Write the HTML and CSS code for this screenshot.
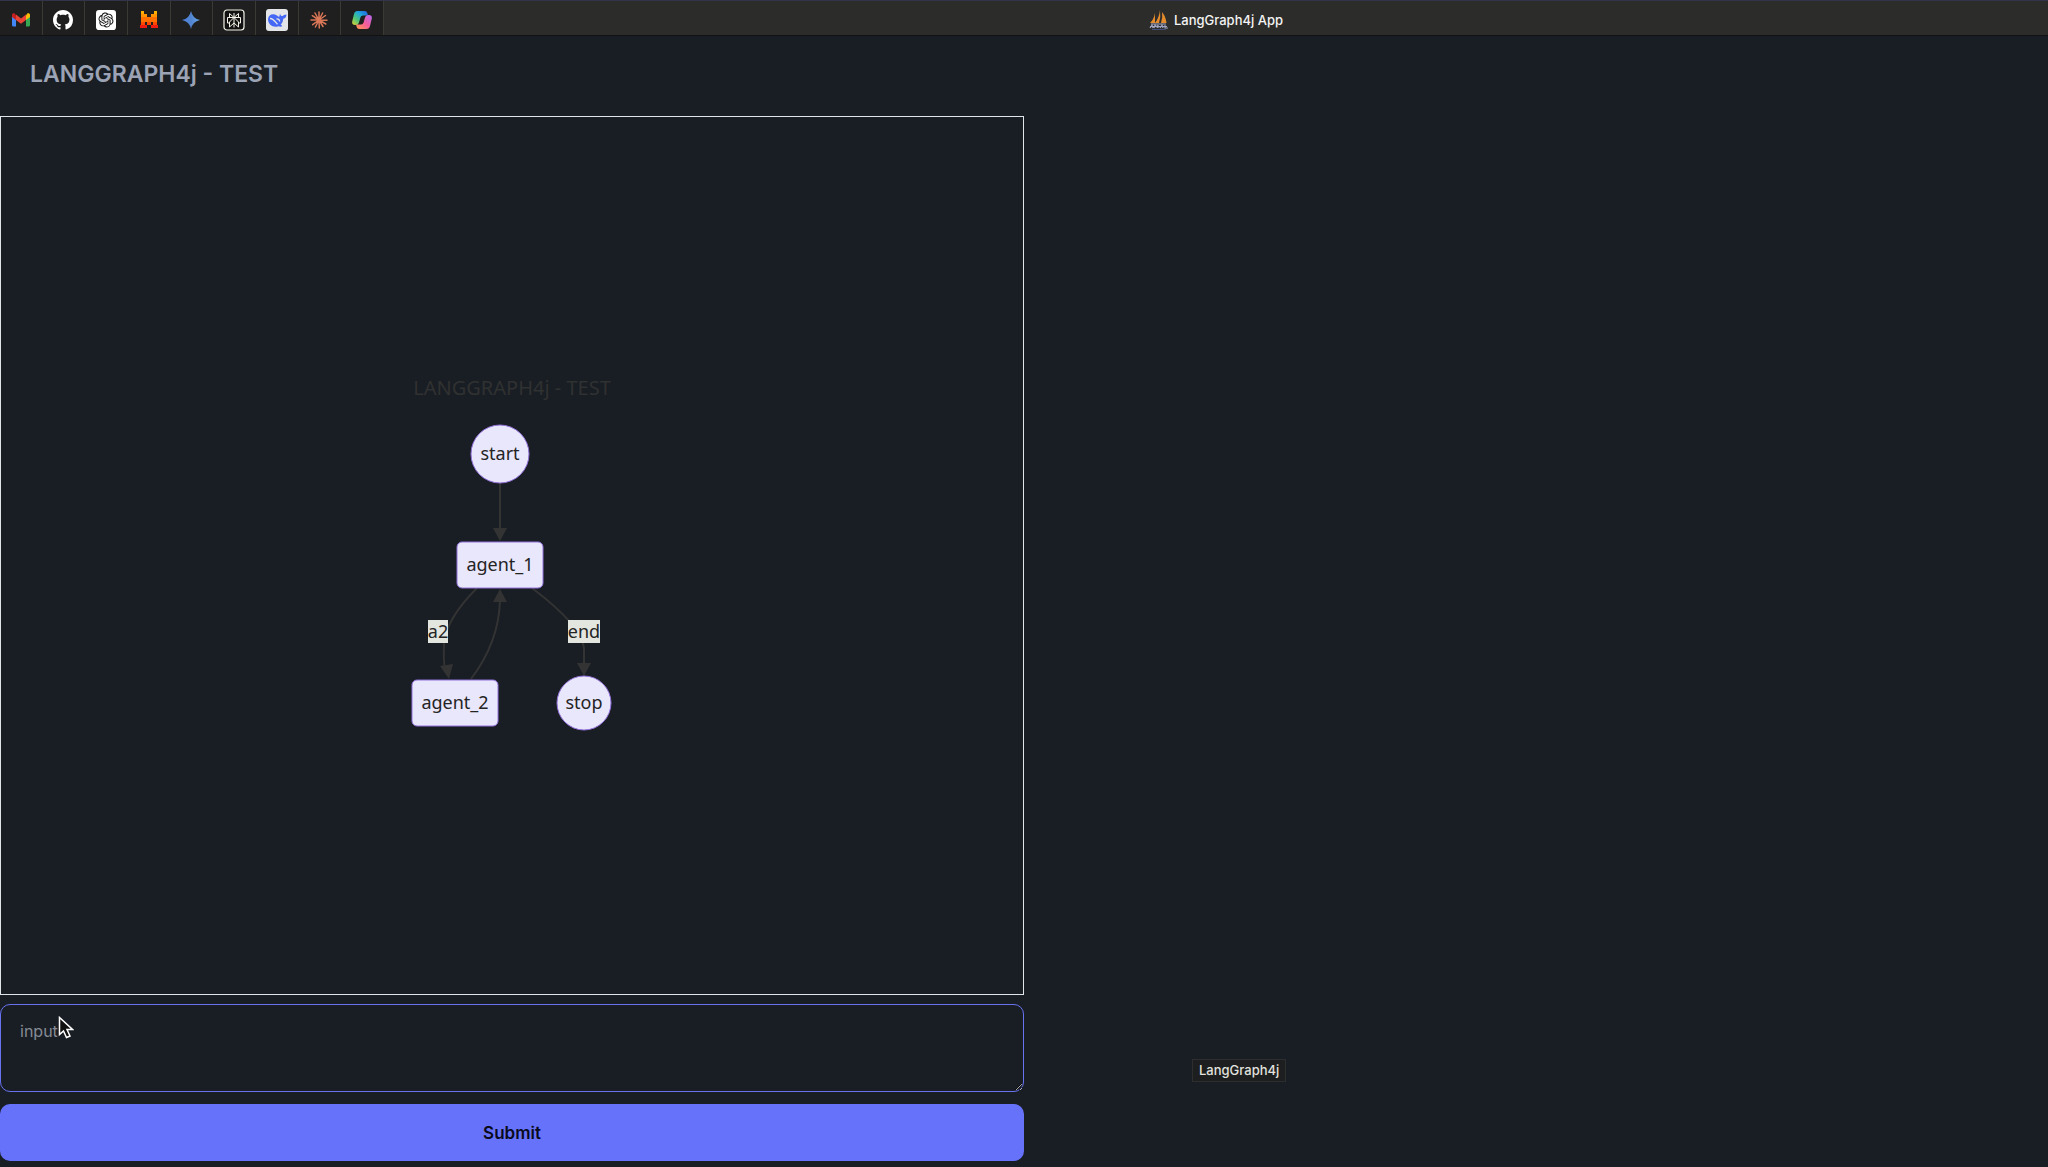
FILE: index.html
```html
<!DOCTYPE html>
<html lang="en">
<head>
<meta charset="utf-8">
<meta name="viewport" content="width=device-width, initial-scale=1">
<title>LangGraph4j App</title>
<link rel="stylesheet" href="styles.css">
</head>
<body>
<header class="tabbar">
  <nav class="pinned" aria-label="Pinned tabs">
    <a class="tab" href="#" aria-label="Gmail"><svg width="18" height="14" viewBox="0 2 18 14"><path fill="#4285f4" d="M0 4v10a1.500 1.500 0 0 0 1.500 1.500H4V8z"/><path fill="#34a853" d="M14 8v7.500h2.500A1.500 1.500 0 0 0 18 14V4z"/><path fill="#fbbc04" d="M14 4.500V9l4-3V4c0-1.800-2-2-3-1.200z"/><path fill="#c5221f" d="M0 4v2l4 3V4.500L3 2.800C2 2 0 2.200 0 4z"/><path fill="#ea4335" d="M4 9V3.600l5 3.800 5-3.800V9l-5 3.800z"/></svg></a>
    <a class="tab" href="#" aria-label="GitHub"><svg width="20" height="20" viewBox="0 0 16 16"><path fill="#fff" d="M8 0C3.580 0 0 3.580 0 8c0 3.540 2.290 6.530 5.470 7.590.4.070.55-.17.55-.38 0-.19-.01-.82-.01-1.490-2.010.37-2.530-.49-2.690-.94-.09-.23-.48-.94-.82-1.130-.28-.15-.68-.52-.01-.53.63-.01 1.080.58 1.230.82.72 1.210 1.870.87 2.330.66.07-.52.28-.87.51-1.070-1.780-.2-3.640-.89-3.640-3.950 0-.87.31-1.590.82-2.150-.08-.2-.36-1.020.08-2.120 0 0 .67-.21 2.200.82.64-.18 1.320-.27 2-.27s1.360.09 2 .27c1.530-1.040 2.200-.82 2.200-.82.44 1.100.16 1.920.08 2.120.51.56.82 1.270.82 2.150 0 3.070-1.870 3.750-3.650 3.950.29.25.54.73.54 1.480 0 1.070-.01 1.930-.01 2.200 0 .21.15.46.55.38A8.010 8.010 0 0 0 16 8c0-4.420-3.580-8-8-8z"/></svg></a>
    <a class="tab" href="#" aria-label="ChatGPT"><svg width="20" height="20" viewBox="-4 -4 32 32"><rect x="-4" y="-4" width="32" height="32" rx="5" fill="#fff"/><path fill="#111" d="M22.2819 9.8211a5.9847 5.9847 0 0 0-.5157-4.9108 6.0462 6.0462 0 0 0-6.5098-2.9A6.0651 6.0651 0 0 0 4.9807 4.1818a5.9847 5.9847 0 0 0-3.9977 2.9 6.0462 6.0462 0 0 0 .7427 7.0966 5.98 5.98 0 0 0 .511 4.9107 6.051 6.051 0 0 0 6.5146 2.9001A5.9847 5.9847 0 0 0 13.2599 24a6.0557 6.0557 0 0 0 5.7718-4.2058 5.9894 5.9894 0 0 0 3.9977-2.9001 6.0557 6.0557 0 0 0-.7475-7.0729zm-9.022 12.6081a4.4755 4.4755 0 0 1-2.8764-1.0408l.1419-.0804 4.7783-2.7582a.7948.7948 0 0 0 .3927-.6813v-6.7369l2.02 1.1686a.071.071 0 0 1 .038.052v5.5826a4.504 4.504 0 0 1-4.4945 4.4944zm-9.6607-4.1254a4.4708 4.4708 0 0 1-.5346-3.0137l.142.0852 4.783 2.7582a.7712.7712 0 0 0 .7806 0l5.8428-3.3685v2.3324a.0804.0804 0 0 1-.0332.0615L9.74 19.9502a4.4992 4.4992 0 0 1-6.1408-1.6464zM2.3408 7.8956a4.485 4.485 0 0 1 2.3655-1.9728V11.6a.7664.7664 0 0 0 .3879.6765l5.8144 3.3543-2.0201 1.1685a.0757.0757 0 0 1-.071 0l-4.8303-2.7865A4.504 4.504 0 0 1 2.3408 7.872zm16.5963 3.8558L13.1038 8.364 15.1192 7.2a.0757.0757 0 0 1 .071 0l4.8303 2.7913a4.4944 4.4944 0 0 1-.6765 8.1042v-5.6772a.79.79 0 0 0-.407-.667zm2.0107-3.0231l-.142-.0852-4.7735-2.7818a.7759.7759 0 0 0-.7854 0L9.409 9.2297V6.8974a.0662.0662 0 0 1 .0284-.0615l4.8303-2.7866a4.4992 4.4992 0 0 1 6.6802 4.66zM8.3065 12.863l-2.02-1.1638a.0804.0804 0 0 1-.038-.0567V6.0742a4.4992 4.4992 0 0 1 7.3757-3.4537l-.142.0805L8.704 5.459a.7948.7948 0 0 0-.3927.6813zm1.0976-2.3654l2.602-1.4998 2.6069 1.4998v2.9994l-2.5974 1.4997-2.6067-1.4997Z"/></svg></a>
    <a class="tab" href="#" aria-label="Mistral"><svg width="20" height="18" viewBox="0 0 20 18"><path fill="#ffb000" d="M2 0h3v4H2zM15 0h3v4h-3z"/><path fill="#ff9300" d="M2 3h6v4H2zM12 3h6v4h-6z"/><path fill="#ff7000" d="M2 6h16v5H2z"/><path fill="#ff4900" d="M2 11h4v4H2zM8 11h4v3H8zM14 11h4v4h-4z"/><path fill="#f01c12" d="M1 14h7v3H1zM12 14h7v3h-7z"/></svg></a>
    <a class="tab" href="#" aria-label="Gemini"><svg width="18" height="18" viewBox="0 0 18 18"><defs><linearGradient id="gem" x1="0" x2="1"><stop stop-color="#4c83df"/><stop offset=".5" stop-color="#5284cf"/><stop offset="1" stop-color="#65a9ed"/></linearGradient></defs><path fill="url(#gem)" d="M9 0q1.500 7.500 9 9-7.500 1.500-9 9-1.500-7.500-9-9 7.500-1.500 9-9z"/></svg></a>
    <a class="tab" href="#" aria-label="Perplexity"><svg width="22" height="22" viewBox="0 0 22 22" fill="none" stroke="#f5f3e9"><rect x="1" y="1" width="20" height="20" rx="3" fill="#111" stroke-width="1.200"/><path stroke-width="1" d="M11 4v14.500M6.500 4.500v4M15.500 4.500v4M6.500 4.500 11 8.500l4.500-4M4.500 8.500h13v5.500h-2M4.500 8.500V14h2M11 8.500 6.500 13v5l4.500-4 4.500 4v-5L11 8.500"/></svg></a>
    <a class="tab" href="#" aria-label="DeepSeek"><svg width="22" height="22" viewBox="0 0 22 22"><rect width="22" height="22" rx="3" fill="#e3e5e8"/><path fill="#4568f5" d="M2 10c.5-4.500 5-6 9-3.500l2 1.500c.9-.8.5-2 1-3.200.5 1.500 1.200 2.400 2.600 2.300.8-.6 1.800-1.600 3.900-1.600-.1 2.800-1.200 3.900-3.200 4.200-.3 2.700-1.200 4.500-2.600 5.800l1.700 1.500c-1.200.9-2.600.8-4 .2C7.500 19 2 16 2 10z"/><path fill="none" stroke="#e3e5e8" stroke-width="1.300" d="M4 9.500c3-.2 5.500 3.500 7.500 5.800M10.500 10c1.800-.2 3 1 3.200 2.500"/></svg></a>
    <a class="tab" href="#" aria-label="Claude"><svg width="18" height="18" viewBox="0 0 18 18" stroke="#d97757" stroke-width="1.500" stroke-linecap="round"><path d="M9 9V1M9 9l3.600-7M9 9l6.500-4.500M9 9l8 .2M9 9l6.800 4M9 9l4 6.500M9 9l.3 8M9 9l-3.600 7M9 9l-6.300 4.700M9 9l-8-.1M9 9 2.300 4.700M9 9 5 2"/></svg></a>
    <a class="tab" href="#" aria-label="Copilot"><svg width="20" height="18" viewBox="0 0 20 18"><defs><linearGradient id="co1" x1="0" y1="1" x2="1" y2="0"><stop stop-color="#e4d52f"/><stop offset=".35" stop-color="#4ac47b"/><stop offset=".65" stop-color="#1ea5df"/><stop offset="1" stop-color="#2558d8"/></linearGradient><linearGradient id="co2" x1="1" y1="0" x2="0" y2="1"><stop stop-color="#b36bf5"/><stop offset=".5" stop-color="#f35b9b"/><stop offset="1" stop-color="#ff9c49"/></linearGradient></defs><path fill="url(#co1)" d="M5.500 0H13q1.800 0 2.300 2l.7 2.500H11Q9 4.500 8.400 6.500L7 11.500Q6.300 14 4 14H3Q-.5 14 .3 10L2 3Q2.700 0 5.500 0z"/><path fill="url(#co2)" d="M14.500 18H7q-1.800 0-2.300-2L4 13.500h5q2 0 2.600-2L13 6.500Q13.700 4 16 4h1q3.500 0 2.700 4L18 15q-.7 3-3.500 3z"/></svg></a>
  </nav>
  <div class="active-tab">
    <svg width="20" height="20" viewBox="0 0 20 20"><path fill="#e58b2c" d="M6 3v10H1q4-4 5-10zM11 0q1 7-1 13H6q4-5 5-13zM13 2q4 5 4.500 11H12q2-6 1-11z"/><path fill="none" stroke="#9fa3bf" stroke-width="1.200" d="M2 14h15M1 18l2-3 1 3M5 18l1-3 2 2 1-2v3M11 18l2-3 1 3M16 15v3h3M1 16.500h17"/><path stroke="#434d7c" d="M3 19.500h14"/></svg>
    <span>LangGraph4j App</span>
  </div>
</header>
<h1 class="title">LANGGRAPH4j - TEST</h1>
<main class="workspace">
  <form class="panel" onsubmit="return false">
    <section class="graph" aria-label="Graph">
      <svg class="diagram" width="204" height="353" viewBox="410 379 204 353">
        <text class="diagram-title" x="512" y="395">LANGGRAPH4j - TEST</text>
        <g class="edge">
          <path d="M500 483v48M477 588Q445 620 444 645t3 26M471 679Q499 642 500 600M532 588q50 38 52 60v20"/>
          <path class="arrow" d="M493 528h14l-7 13zM440 666l13-2-4 15zM577 663h14l-7 13zM493 602h14l-7-13z"/>
        </g>
        <g class="node">
          <circle cx="500" cy="454" r="29"/>
          <rect x="457" y="542" width="86" height="46" rx="5"/>
          <rect x="412" y="680" width="86" height="46" rx="5"/>
          <circle cx="584" cy="703" r="27"/>
        </g>
        <path class="edge-label" d="M428 620h20v23h-20zM568 620h32v23h-32z"/>
        <g class="label">
          <text x="500" y="460">start</text>
          <text x="500" y="571">agent_1</text>
          <text x="455" y="709">agent_2</text>
          <text x="584" y="709">stop</text>
          <text x="438" y="638">a2</text>
          <text x="584" y="638">end</text>
        </g>
      </svg>
    </section>
    <textarea class="input" aria-label="input" placeholder="input"></textarea>
    <button class="submit" type="submit">Submit</button>
  </form>
  <section class="output" aria-label="Output"></section>
</main>
<div class="tooltip" role="tooltip">LangGraph4j</div>
<svg class="cursor" width="16" height="24" viewBox="0 0 16 24" aria-hidden="true"><path fill="#111" stroke="#fff" stroke-width="1.500" d="M1.500 1.500v17l4-3.500 3 6.500 3.500-1.500-3-6.500h5.500z"/></svg>
</body>
</html>
```
FILE: styles.css
```css
* {
  box-sizing: border-box;
}

body {
  margin: 0;
  min-height: 100vh;
  display: flex;
  flex-direction: column;
  background: #191e24;
  color: #a6adbb;
  font-family: Inter, "Liberation Sans", sans-serif;
}

.tabbar {
  display: flex;
  height: 36px;
  background: #2c2c2b;
  border-top: 1px solid #33334a;
  border-bottom: 1px solid #101214;
}

.pinned {
  display: grid;
  grid-template-columns: repeat(9, 1fr);
  width: 384px;
  background: #1e1f1e;
}

.tab {
  display: flex;
  align-items: center;
  justify-content: center;
  padding-top: 3px;
  border-right: 1px solid #3a3a34;
}

.active-tab {
  flex: 1;
  display: flex;
  align-items: center;
  justify-content: center;
  gap: 5px;
  padding-top: 3px;
  color: #f4f4f4;
  font-size: 13px;
  font-weight: 500;
}

.title {
  margin: 0;
  padding: 24px 30px;
  height: 80px;
  color: #9ba3b4;
  font-size: 23px;
  line-height: 28px;
  font-weight: 600;
}

.workspace {
  flex: 1;
  display: grid;
  grid-template-columns: 1fr 1fr;
}

.panel {
  display: flex;
  flex-direction: column;
  padding-bottom: 6px;
}

.graph {
  flex: 1;
  display: flex;
  align-items: center;
  justify-content: center;
  margin-bottom: 9px;
  border: 1px solid #dfe5e8;
}

.diagram {
  display: block;
  overflow: visible;
  font-family: "Noto Sans", sans-serif;
  text-anchor: middle;
}

.diagram-title {
  fill: #303131;
  font-size: 20px;
}

.label {
  fill: #242424;
  font-size: 18px;
}

.node {
  fill: #e9e7fb;
  stroke: #9370db;
  stroke-width: 1;
}

.edge {
  fill: none;
  stroke: #333;
  stroke-width: 2;
}

.arrow {
  fill: #333;
  stroke: none;
}

.edge-label {
  fill: #e3e5df;
}

.input {
  display: block;
  width: 100%;
  height: 88px;
  margin: 0 0 12px;
  padding: 14px 19px;
  border: 1px solid #6872f0;
  border-radius: 10px;
  background: transparent;
  color: #a6adbb;
  font: 16px/24px Inter, "Liberation Sans", sans-serif;
  resize: vertical;
}

.input::placeholder {
  color: #858b96;
}

.submit {
  height: 57px;
  border: 0;
  border-radius: 10px;
  background: #6772fb;
  color: #090b1d;
  font: 600 17px/24px Inter, "Liberation Sans", sans-serif;
}

.tooltip {
  position: absolute;
  left: 1192px;
  top: 1059px;
  padding: 2px 6px;
  border: 1px solid #2d2e2e;
  background: #1c1e1f;
  color: #e2e2df;
  font-size: 13px;
  line-height: 17px;
  font-weight: 500;
}

.cursor {
  position: absolute;
  left: 58px;
  top: 1016px;
}
```
